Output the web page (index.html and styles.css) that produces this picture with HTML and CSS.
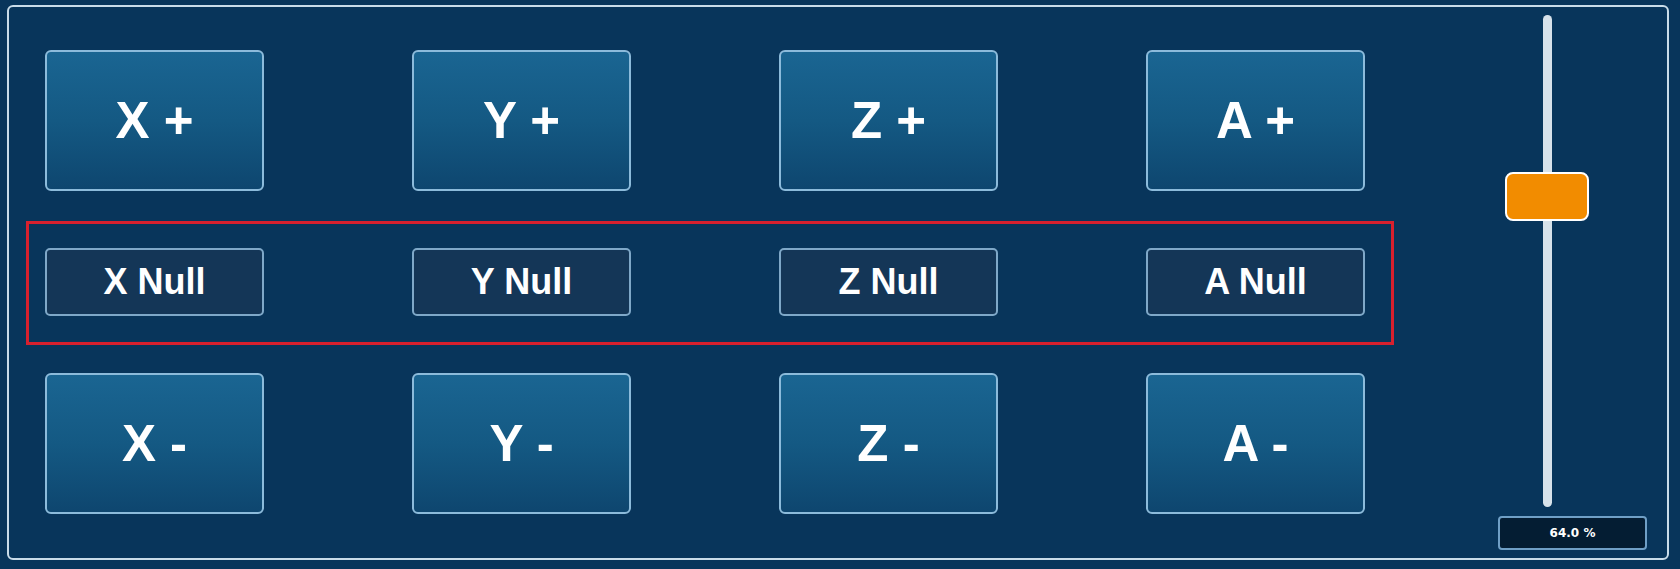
FILE: index.html
```html
<!DOCTYPE html>
<html>
<head>
<meta charset="utf-8">
<link rel="stylesheet" href="styles.css">
</head>
<body>
<div class="frame">
  <div class="pads">
    <div class="row jog">
      <div class="btn">X +</div>
      <div class="btn">Y +</div>
      <div class="btn">Z +</div>
      <div class="btn">A +</div>
    </div>
    <div class="nullbox">
      <div class="row">
        <div class="nbtn">X Null</div>
        <div class="nbtn">Y Null</div>
        <div class="nbtn">Z Null</div>
        <div class="nbtn">A Null</div>
      </div>
    </div>
    <div class="row jog">
      <div class="btn">X -</div>
      <div class="btn">Y -</div>
      <div class="btn">Z -</div>
      <div class="btn">A -</div>
    </div>
  </div>
  <div class="side">
    <div class="track-wrap">
      <div class="track"></div>
      <div class="thumb"></div>
    </div>
    <div class="readout">64.0 %</div>
  </div>
</div>
</body>
</html>
```
FILE: styles.css
```css
* { box-sizing: border-box; }
html, body {
  margin: 0;
  padding: 0;
  background: #08355b;
  width: 1680px;
  height: 569px;
  overflow: hidden;
  font-family: "Liberation Sans", Arial, sans-serif;
}
body { padding: 5px 0 0 7px; }
.frame {
  width: 1662px;
  height: 555px;
  border: 2px solid #c9dce9;
  border-radius: 6px;
  display: flex;
}
.pads {
  display: flex;
  flex-direction: column;
  padding: 43px 0 0 17px;
}
.row {
  display: grid;
  grid-template-columns: repeat(4, 219px);
  column-gap: 148px;
}
.jog { margin-left: 19px; }
.btn {
  height: 141px;
  border: 2px solid #8cbbdb;
  border-radius: 6px;
  background: linear-gradient(to bottom, #1a6592 0%, #145983 50%, #0e466f 100%);
  color: #ffffff;
  font-weight: bold;
  font-size: 51px;
  display: flex;
  align-items: center;
  justify-content: center;
}
.nullbox {
  margin: 30px 0 28px 0;
  width: 1368px;
  border: 3px solid #d8202e;
  padding: 24px 0 26px 16px;
}
.nbtn {
  height: 68px;
  border: 2px solid #7fa8c8;
  border-radius: 5px;
  background: #143657;
  color: #ffffff;
  font-weight: bold;
  font-size: 36px;
  display: flex;
  align-items: center;
  justify-content: center;
}
.side {
  margin-left: auto;
  margin-right: 20px;
  width: 149px;
  display: flex;
  flex-direction: column;
  padding-top: 8px;
}
.track-wrap {
  position: relative;
  height: 492px;
}
.track {
  margin-left: 45px;
  width: 9px;
  height: 100%;
  border-radius: 5px;
  background: #d7e2ea;
}
.thumb {
  position: absolute;
  left: 7px;
  top: 157px;
  width: 84px;
  height: 49px;
  background: #f28c00;
  border: 2px solid #ffffff;
  border-radius: 8px;
}
.readout {
  margin-top: 9px;
  height: 34px;
  border: 2px solid #6f9fc6;
  border-radius: 4px;
  background: #041d33;
  color: #ffffff;
  font-family: "DejaVu Sans", Verdana, sans-serif;
  font-weight: bold;
  font-size: 12px;
  display: flex;
  align-items: center;
  justify-content: center;
}
```
